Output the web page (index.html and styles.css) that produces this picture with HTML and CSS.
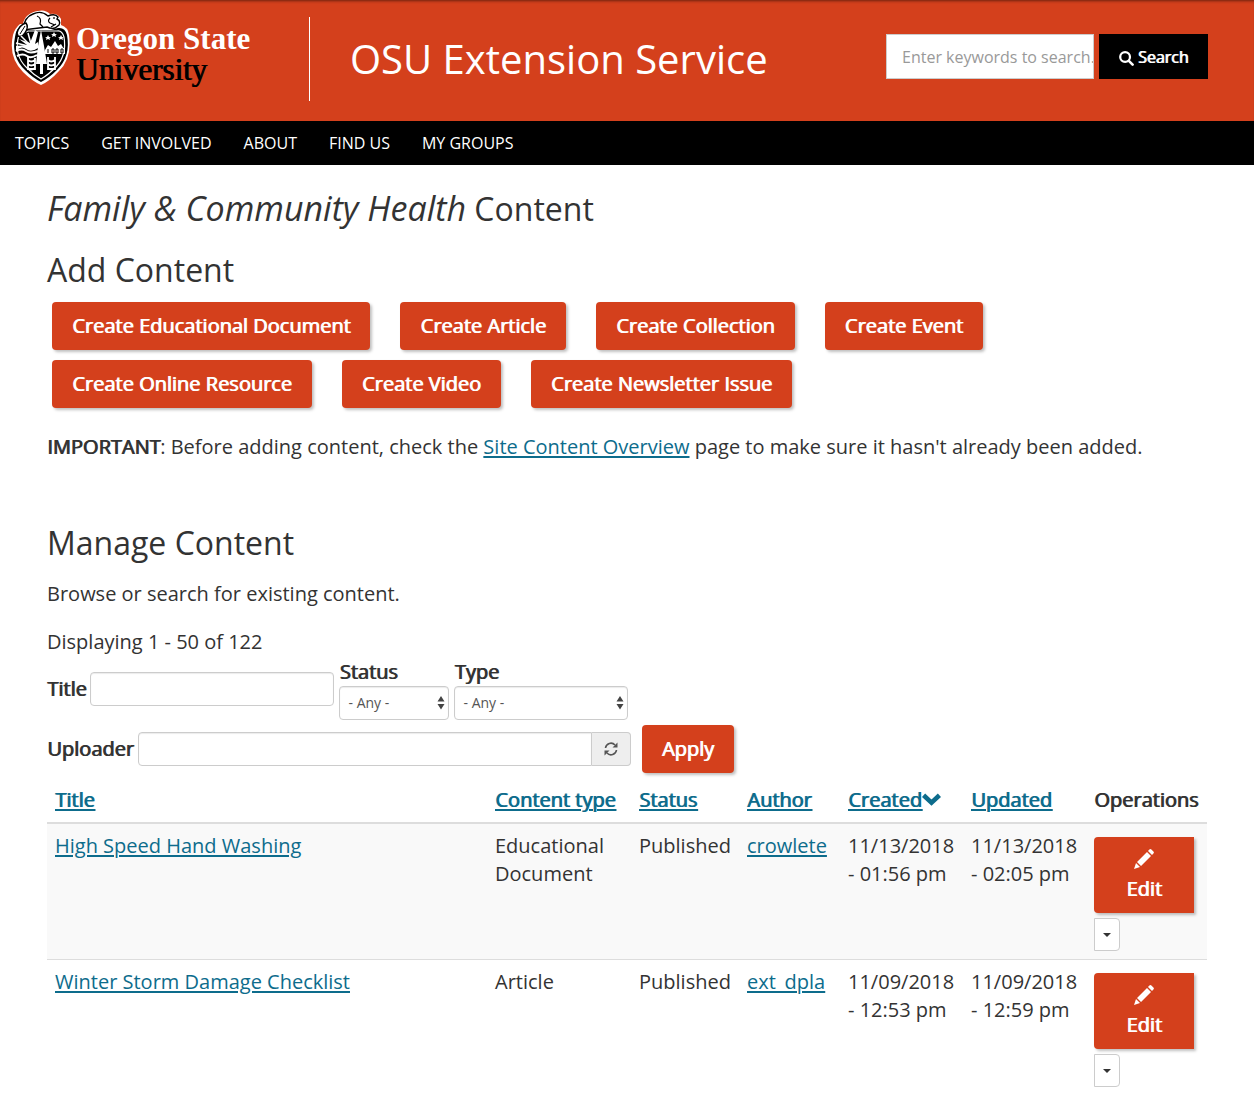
FILE: index.html
```html
<!DOCTYPE html>
<html lang="en">
<head>
<meta charset="utf-8">
<meta name="viewport" content="width=device-width, initial-scale=1">
<title>Family &amp; Community Health Content | OSU Extension Service</title>
<link rel="stylesheet" href="styles.css">
</head>
<body>
<svg class="sprite" aria-hidden="true">
  <symbol id="pencil" viewBox="0 0 20 20"><path d="M0 20l2-6 4 4zM3 13L13 3l4 4L7 17zM14 2l1.400-1.400q1-1 2 0l2 2q1 1 0 2L18 6z"/></symbol>
  <symbol id="updown" viewBox="0 0 8 14"><path d="M4 0l3.500 5.500h-7zM4 13.500L.5 8h7z"/></symbol>
</svg>

<header class="site-header">
  <a class="logo" href="#">
    <svg class="crest" viewBox="0 0 60 76" role="img" aria-label="Beaver crest">
      <path d="M12 14C13 7 19 2 27 1Q34-1 39 4Q47 3 50 9L50 15Q57 17 58 25Q61 49 48 61Q39 71 30 75Q21 71 12 62Q-3 47 2 25Q4 18 9 14Z" fill="#fff"/>
      <path d="M12 15Q5 18 4 27Q0 47 14 60Q22 68 30 72Q38 68 46 60Q60 46 56 25Q54 17 47 18L40 20H18Z" fill="#000"/>
      <path d="M8 25Q2 45 16 58Q23 65 30 69Q37 65 45 57Q56 45 53 27Q51 20 46 21H17Z" fill="none" stroke="#fff" stroke-width="1.200"/>
      <path d="M12 20Q13 7 22 4Q30 0 37 6Q44 3 47 7L46 9Q50 11 48 15L44 18Q40 19 36 17L28 18Z" fill="#fff" stroke="#000" stroke-width="1.400"/>
      <path d="M26 6Q31 8 29 14L32 17M39 8q-3 3 0 5l5 2M43 7v2M40 17l5-3" fill="none" stroke="#000" stroke-width="1.200"/>
      <path d="M6 23Q8 15 15 13Q18 17 14 23Q11 28 7 26Z" fill="#fff" stroke="#000" stroke-width="1.500"/>
      <path d="M9 24l5-8" stroke="#000"/>
      <path d="M24 20L19 33L8 29L16 35L5 36V41Q10 35 15 39Q20 43 27 38V32L24 34L27 22Z" fill="#fff"/>
      <path d="M10 26l8 8M17 23l3 11M5 33l12 3" stroke="#fff" stroke-width="1.500"/>
      <path d="M5 41q6-3 10 0t12 0M6 46q6-3 10 0t10-1" fill="none" stroke="#fff" stroke-width="2"/>
      <path d="M30 20L27 36L25 54h4v10h3V54h4L33 36Z" fill="#fff"/>
      <path d="M34 40l3-5 3 2 4-6 3 5 3-2 4 7v3H34Z" fill="#fff"/>
      <path d="M36 38h18v6H36z" fill="#fff"/>
      <path d="M37 39v4M41 39h2v4h-2zM45 39h2v4h-2zM50 39h2v4h-2z" fill="none" stroke="#000"/>
      <path d="M37 25l1 2h2l-1.500 1 .5 2-2-1-2 1 .5-2L34 27h2zM43 22l1 2h2l-1.500 1 .5 2-2-1-2 1 .5-2L40 24h2zM50 25l1 2h2l-1.500 1 .5 2-2-1-2 1 .5-2L47 27h2z" fill="#fff"/>
      <path d="M17 47v12h7V48M37 47v12h7V47M17 50q3 3 7 0M17 54q3 3 7 0M17 58q3 3 7 0M37 50q3 3 7 0M37 54q3 3 7 0M37 58q3 3 7 0" fill="none" stroke="#fff" stroke-width="1.800"/>
    </svg>
    <span class="wordmark"><span class="wordmark-top">Oregon State</span><span class="wordmark-bottom">University</span></span>
  </a>
  <a class="site-name" href="#">OSU Extension Service</a>
  <form class="search" role="search">
    <input class="search-input" type="text" placeholder="Enter keywords to search..." aria-label="Search keywords">
    <button class="search-button" type="button">
      <svg class="search-icon" viewBox="0 0 16 16" aria-hidden="true"><circle cx="6.500" cy="6.500" r="5.200" fill="none" stroke="currentColor" stroke-width="2.400"/><path d="M10.500 10.500l4 4" stroke="currentColor" stroke-width="2.800" stroke-linecap="round"/></svg>
      Search
    </button>
  </form>
</header>

<nav class="main-nav" aria-label="Main">
  <a href="#">TOPICS</a>
  <a href="#">GET INVOLVED</a>
  <a href="#">ABOUT</a>
  <a href="#">FIND US</a>
  <a href="#">MY GROUPS</a>
</nav>

<main class="content">
  <h1><em>Family &amp; Community Health</em> Content</h1>

  <section class="add-content">
    <h2>Add Content</h2>
    <div class="create-buttons">
      <button class="btn" type="button">Create Educational Document</button>
      <button class="btn" type="button">Create Article</button>
      <button class="btn" type="button">Create Collection</button>
      <button class="btn" type="button">Create Event</button>
      <button class="btn" type="button">Create Online Resource</button>
      <button class="btn" type="button">Create Video</button>
      <button class="btn" type="button">Create Newsletter Issue</button>
    </div>
    <p><b class="strong">IMPORTANT</b>: Before adding content, check the <a href="#">Site Content Overview</a> page to make sure it hasn't already been added.</p>
  </section>

  <section class="manage-content">
    <h2>Manage Content</h2>
    <p>Browse or search for existing content.</p>
    <p class="count">Displaying 1 - 50 of 122</p>

    <form class="filters">
      <div class="filter-row">
        <div class="inline-field">
          <label for="title">Title</label>
          <input class="field title-field" id="title" type="text">
        </div>
        <div class="stacked-field status-field">
          <label for="status">Status</label>
          <div class="select-box">
            <select class="field" id="status"><option>- Any -</option></select>
            <svg class="select-arrows" aria-hidden="true"><use href="#updown"/></svg>
          </div>
        </div>
        <div class="stacked-field type-field">
          <label for="type">Type</label>
          <div class="select-box">
            <select class="field" id="type"><option>- Any -</option></select>
            <svg class="select-arrows" aria-hidden="true"><use href="#updown"/></svg>
          </div>
        </div>
      </div>
      <div class="filter-row">
        <div class="inline-field">
          <label for="uploader">Uploader</label>
          <div class="input-group">
            <input class="field uploader-field" id="uploader" type="text">
            <span class="addon">
              <svg class="refresh-icon" viewBox="0 0 14 14" aria-hidden="true"><path d="M1.500 6A5.500 5.500 0 0 1 11 3M12.500 8A5.500 5.500 0 0 1 3 11" fill="none" stroke="currentColor" stroke-width="1.600"/><path d="M13.500.5V5.500H8.500zM.5 13.500V8.500H5.500z" fill="currentColor"/></svg>
            </span>
          </div>
        </div>
        <button class="btn apply" type="button">Apply</button>
      </div>
    </form>

    <table class="listing">
      <colgroup><col class="col-title"><col class="col-type"><col class="col-status"><col class="col-author"><col class="col-date"><col class="col-date"><col class="col-ops"></colgroup>
      <thead>
        <tr>
          <th scope="col"><a href="#">Title</a></th>
          <th scope="col"><a href="#">Content type</a></th>
          <th scope="col"><a href="#">Status</a></th>
          <th scope="col"><a href="#">Author</a></th>
          <th scope="col"><a href="#">Created<svg class="chevron" viewBox="0 0 18 13" aria-hidden="true"><path d="M1.500 2L9 9l7.500-7" fill="none" stroke="currentColor" stroke-width="4.400"/></svg></a></th>
          <th scope="col"><a href="#">Updated</a></th>
          <th scope="col">Operations</th>
        </tr>
      </thead>
      <tbody>
        <tr>
          <td><a href="#">High Speed Hand Washing</a></td>
          <td>Educational Document</td>
          <td>Published</td>
          <td><a href="#">crowlete</a></td>
          <td>11/13/2018 - 01:56 pm</td>
          <td>11/13/2018 - 02:05 pm</td>
          <td>
            <div class="operations">
              <button class="btn edit" type="button"><svg class="pencil" aria-hidden="true"><use href="#pencil"/></svg>Edit</button>
              <button class="toggle" type="button" aria-label="More operations"><span class="caret"></span></button>
            </div>
          </td>
        </tr>
        <tr>
          <td><a href="#">Winter Storm Damage Checklist</a></td>
          <td>Article</td>
          <td>Published</td>
          <td><a href="#">ext_dpla</a></td>
          <td>11/09/2018 - 12:53 pm</td>
          <td>11/09/2018 - 12:59 pm</td>
          <td>
            <div class="operations">
              <button class="btn edit" type="button"><svg class="pencil" aria-hidden="true"><use href="#pencil"/></svg>Edit</button>
              <button class="toggle" type="button" aria-label="More operations"><span class="caret"></span></button>
            </div>
          </td>
        </tr>
      </tbody>
    </table>
  </section>
</main>
</body>
</html>
```

FILE: styles.css
```css
:root {
  --orange: #d4401c;
  --link: #0d6c8c;
  --ink: #333;
  --line: #ccc;
}

* { box-sizing: border-box; }

body {
  margin: 0;
  background: #fff;
  color: var(--ink);
  font: 400 20px/28px "Open Sans", "Noto Sans", sans-serif;
}

button, input, select { font: inherit; }
button { cursor: pointer; }
a { color: var(--link); text-underline-offset: 2px; }
.sprite { display: none; }

/* Header */
.site-header {
  display: flex;
  align-items: flex-start;
  min-height: 121px;
  padding: 0 46px 0 11px;
  background: var(--orange);
  box-shadow: inset 0 3px 3px -2px rgba(0, 0, 0, .5);
}

.logo {
  display: flex;
  gap: 5px;
  width: 298px;
  padding-top: 10px;
  text-decoration: none;
}

.crest { width: 60px; height: 76px; }

.wordmark {
  display: flex;
  flex-direction: column;
  padding-top: 13px;
  font-family: "Liberation Serif", serif;
  font-size: 31px;
  line-height: 31px;
}

.wordmark-top { color: #fff; font-weight: 700; }
.wordmark-bottom { color: #000; text-shadow: 1px 0 currentColor; }

.site-name {
  margin-top: 17px;
  padding-left: 40px;
  border-left: 1px solid #fff;
  color: #fff;
  font-size: 40px;
  line-height: 84px;
  text-decoration: none;
  white-space: nowrap;
}

.search {
  display: flex;
  gap: 5px;
  margin: 34px 0 0 auto;
}

.search-input {
  width: 208px;
  height: 45px;
  padding: 0 0 0 15px;
  border: 1px solid var(--line);
  border-radius: 0;
  font-size: 16px;
}

.search-input::placeholder { color: #999; }

.search-button {
  display: flex;
  align-items: center;
  justify-content: center;
  gap: 4px;
  width: 109px;
  height: 45px;
  padding: 0;
  border: 0;
  background: #000;
  color: #fff;
  font-size: 16px;
  text-shadow: 1px 0 currentColor;
}

.search-icon { width: 15px; height: 15px; margin-top: 3px; }

/* Navigation */
.main-nav {
  display: flex;
  gap: 32px;
  padding: 0 15px;
  background: #000;
  font-size: 16px;
  line-height: 44px;
}

.main-nav a { color: #fff; text-decoration: none; }

/* Page content */
.content { padding: 24px 47px; }

h1, h2 {
  margin: 0;
  font-size: 32px;
  font-weight: 400;
  line-height: 40px;
}

h1 em { font-size: 34px; line-height: 1; }

p { margin: 0 0 20px; }

.add-content { padding-top: 21px; }

.create-buttons {
  display: flex;
  flex-wrap: wrap;
  gap: 10px 30px;
  max-width: 1060px;
  padding: 12px 5px 25px;
}

.manage-content { padding-top: 42px; }
.manage-content h2 { margin-bottom: 17px; }
.manage-content .count { margin-bottom: 2px; }

.btn {
  height: 48px;
  padding: 0 20px;
  border: 0;
  border-radius: 4px;
  background: var(--orange);
  box-shadow: 2px 2px 3px rgba(0, 0, 0, .25);
  color: #fff;
}

.btn, label, th, .strong {
  font-weight: 400;
  text-shadow: 1px 0 currentColor;
}

/* Filters */
.filter-row {
  display: flex;
  align-items: center;
  gap: 5px;
  margin-bottom: 5px;
}

.inline-field {
  display: flex;
  align-items: center;
  gap: 4px;
}

.field {
  display: block;
  height: 34px;
  padding: 0 8px;
  border: 1px solid var(--line);
  border-radius: 4px;
  background: #fff;
  box-shadow: inset 0 1px 1px rgba(0, 0, 0, .08);
  color: #555;
  font-size: 14px;
}

.title-field { width: 244px; }
.status-field { width: 110px; }
.type-field { width: 174px; }
.select-box { position: relative; }

select.field {
  width: 100%;
  appearance: none;
}

.select-arrows {
  position: absolute;
  top: 10px;
  right: 4px;
  width: 8px;
  height: 14px;
  fill: #444;
  pointer-events: none;
}

.input-group { display: flex; }
.uploader-field { width: 454px; border-radius: 4px 0 0 4px; }

.addon {
  display: flex;
  align-items: center;
  justify-content: center;
  width: 39px;
  border: 1px solid var(--line);
  border-left: 0;
  border-radius: 0 4px 4px 0;
  background: #eee;
  color: #555;
}

.refresh-icon { width: 14px; height: 14px; }
.apply { margin-left: 6px; }

/* Listing */
.listing {
  width: 100%;
  border-collapse: separate;
  border-spacing: 0;
  table-layout: fixed;
}

.col-type { width: 144px; }
.col-status { width: 108px; }
.col-author { width: 101px; }
.col-date { width: 123px; }
.col-ops { width: 121px; }

th, td {
  padding: 8px 7px 8px 8px;
  text-align: left;
  vertical-align: top;
}

th { border-bottom: 2px solid #ddd; white-space: nowrap; }
tbody tr:nth-child(odd) { background: #f9f9f9; }
tbody tr + tr td { border-top: 1px solid #ddd; }
.chevron { width: 19px; height: 14px; }

.operations {
  display: flex;
  flex-direction: column;
  align-items: flex-start;
  gap: 5px;
  padding-top: 5px;
}

.edit {
  display: flex;
  flex-direction: column;
  align-items: center;
  width: 100px;
  height: 76px;
  padding: 12px 0 0;
  border-radius: 4px 0 0 4px;
}

.pencil {
  width: 20px;
  height: 20px;
  margin-bottom: 6px;
  fill: #fff;
}

.toggle {
  display: flex;
  align-items: center;
  justify-content: center;
  width: 26px;
  height: 33px;
  padding: 0;
  border: 1px solid var(--line);
  border-radius: 0 4px 4px 0;
  background: #fff;
}

.caret {
  border: 4px solid transparent;
  border-top-color: #333;
  border-bottom: 0;
}
```
